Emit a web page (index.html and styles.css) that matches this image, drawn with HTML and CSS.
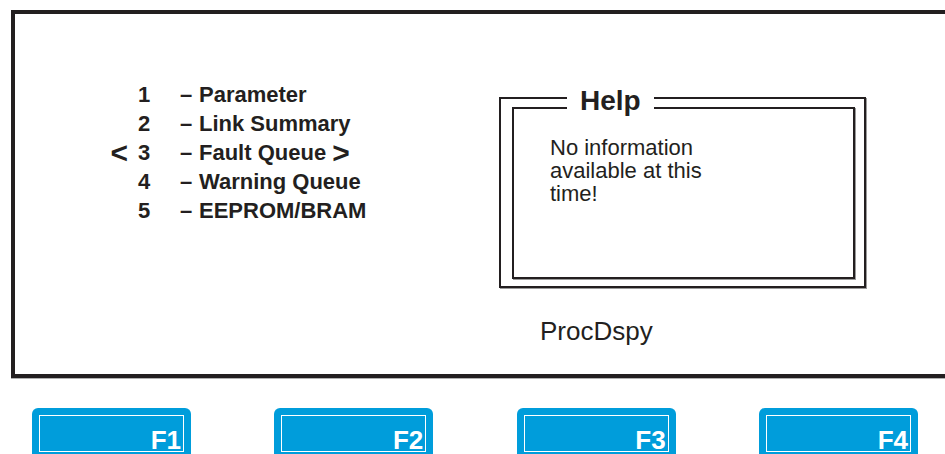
FILE: index.html
```html
<!doctype html>
<html lang="en">
    <head>
        <meta charset="utf-8">
        <title>ProcDspy</title>
        <link rel="stylesheet" href="styles.css">
    </head>

    <body>
        <div class="screen">
            <div class="menu">
                <div class="row">
                    <span class="arrow"></span>
                    <span class="num">1</span>
                    <span class="dash">&ndash;</span>
                    <span class="label">Parameter</span>
                </div>
                <div class="row">
                    <span class="arrow"></span>
                    <span class="num">2</span>
                    <span class="dash">&ndash;</span>
                    <span class="label">Link Summary</span>
                </div>
                <div class="row">
                    <span class="arrow">&lt;</span>
                    <span class="num">3</span>
                    <span class="dash">&ndash;</span>
                    <span class="label">Fault Queue <span class="arrow-r">&gt;</span></span>
                </div>
                <div class="row">
                    <span class="arrow"></span>
                    <span class="num">4</span>
                    <span class="dash">&ndash;</span>
                    <span class="label">Warning Queue</span>
                </div>
                <div class="row">
                    <span class="arrow"></span>
                    <span class="num">5</span>
                    <span class="dash">&ndash;</span>
                    <span class="label">EEPROM/BRAM</span>
                </div>
            </div>

            <div class="panel">
                <div class="help">
                    <span class="help-title">Help</span>
                    <div class="help-inner">
                        No information<br>
                        available at this<br>
                        time!
                    </div>
                </div>
                <div class="mode">ProcDspy</div>
            </div>
        </div>

        <div class="keys">
            <div class="key"><div class="key-face">F1</div></div>
            <div class="key"><div class="key-face">F2</div></div>
            <div class="key"><div class="key-face">F3</div></div>
            <div class="key"><div class="key-face">F4</div></div>
        </div>
    </body>
</html>
```

FILE: styles.css
```css
html, body{
    margin: 0;
    overflow: hidden;
}
body{
    font-family: 'Liberation Sans', Arial, sans-serif;
    color: #231f20;
    background: white;
}
.screen{
    display: flex;
    margin: 10px 0 0 11px;
    height: 360px;
    border: 4px solid #231f20;
    border-right: 0;
    box-shadow: 0 1px 0 #b0b0b0;
}
.menu{
    width: 391px;
    padding: 66px 0 0 93px;
    font-size: 22px;
    font-weight: bold;
}
.row{
    display: grid;
    grid-template-columns: 30px 42px 19px auto;
    align-items: baseline;
    line-height: 29px;
}
.arrow{
    padding-right: 10px;
    text-align: right;
    font-size: 30px;
    line-height: 24px;
    position: relative;
    top: 3px;
}
.arrow-r{
    font-size: 30px;
    line-height: 24px;
    vertical-align: -3px;
}
.panel{
    display: flex;
    flex-direction: column;
    padding-top: 83px;
}
.help{
    position: relative;
    display: flex;
    box-sizing: border-box;
    width: 367px;
    height: 191px;
    padding: 8px 9px 7px 11px;
    border: 2px solid #231f20;
    box-shadow: 1px 1px 0 #9a9a9a;
}
.help-title{
    position: absolute;
    left: 66px;
    top: -12px;
    padding: 0 13px;
    background: white;
    font-size: 28px;
    font-weight: bold;
    line-height: 28px;
}
.help-inner{
    flex: 1;
    padding: 27px 0 0 36px;
    border: 2px solid #231f20;
    box-shadow: 1px 1px 0 #9a9a9a;
    font-size: 22px;
    line-height: 23px;
}
.mode{
    margin: 28px 0 0 41px;
    font-size: 26px;
    line-height: 30px;
}
.keys{
    display: flex;
    justify-content: space-between;
    margin-top: 30px;
    padding: 0 27px 0 32px;
}
.key{
    width: 159px;
    height: 46px;
    box-sizing: border-box;
    padding: 7px 7px 0;
    border-radius: 6px 6px 0 0;
    background: #009ddb;
}
.key-face{
    height: 37px;
    box-sizing: border-box;
    padding: 14px 2px 0 0;
    border: 1px solid white;
    text-align: right;
    color: white;
    font-size: 26px;
    font-weight: bold;
    line-height: 21px;
}
```
